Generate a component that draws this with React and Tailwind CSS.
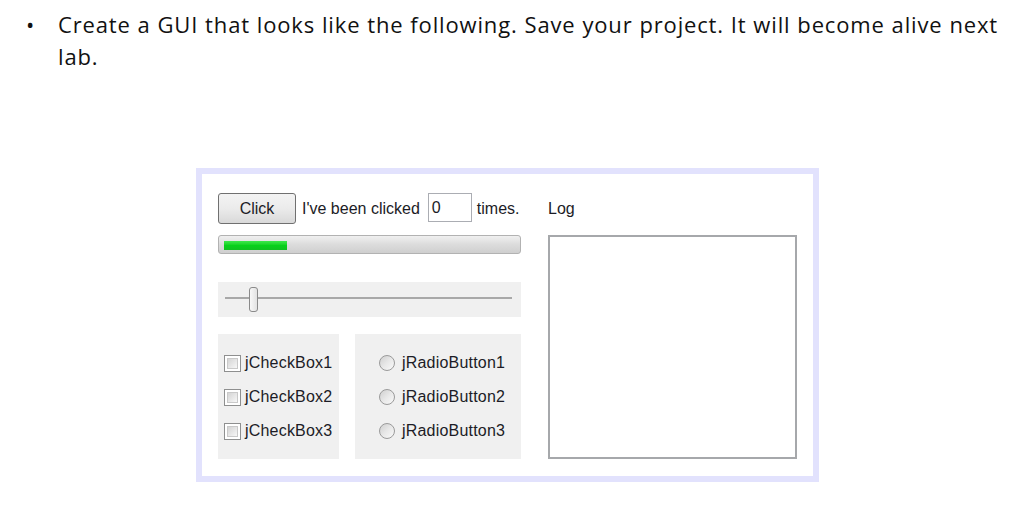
import React from "react";

const gui = { fontFamily: '"Liberation Sans", Arial, sans-serif' };
const head = { fontFamily: '"Open Sans", "Noto Sans", sans-serif' };

function CheckRow({ label }) {
  return (
    <div className="flex h-[34px] items-center">
      <span className="box-border h-[17px] w-[17px] border border-[#8e8f8f] bg-white p-[2px]">
        <span className="block h-full w-full border border-[#c9c9c9] bg-gradient-to-br from-[#d4d4d4] to-[#f7f7f7]" />
      </span>
      <span className="ml-[4px] text-[16px] leading-none tracking-[0.2px] text-[#1c1c26]">{label}</span>
    </div>
  );
}

function RadioRow({ label }) {
  return (
    <div className="flex h-[34px] items-center">
      <span className="box-border h-[16px] w-[16px] rounded-full border border-[#9a9a9a] bg-gradient-to-br from-[#cfcfcf] via-[#e8e8e8] to-[#fafafa]" />
      <span className="ml-[7px] text-[16px] leading-none tracking-[0.2px] text-[#1c1c26]">{label}</span>
    </div>
  );
}

export default function App() {
  return (
    <div className="flex h-[514px] w-[1024px] flex-col bg-white">
      <div className="flex h-[168px] items-start pt-[8px]">
        <span className="ml-[26px] w-[32px] text-[22px] leading-[32px] text-[#111]" style={head}>
          •
        </span>
        <p
          className="w-[940px] text-justify text-[22px] leading-[32px] tracking-[0.85px] text-[#111]"
          style={head}
        >
          Create a GUI that looks like the following. Save your project. It will become alive next lab.
        </p>
      </div>

      <div
        className="ml-[196px] box-border flex h-[314px] w-[623px] border-[6px] border-[#e2e2fd] bg-white pl-[16px] pt-[19px]"
        style={gui}
      >
        <div className="flex w-[303px] flex-col">
          <div className="flex h-[31px] items-center">
            <button className="box-border h-[31px] w-[78px] rounded-[3px] border border-[#707070] bg-gradient-to-b from-[#f3f3f3] via-[#ebebeb] to-[#d9d9d9] text-[16px] text-[#1c1c26]">
              Click
            </button>
            <span className="ml-[6px] text-[16px] text-[#1c1c26]">I've been clicked</span>
            <span className="ml-[8px] box-border flex h-[29px] w-[44px] items-center self-start border border-[#abadb3] bg-white pl-[3px] text-[16px] text-[#1c1c26]">
              0
            </span>
            <span className="ml-[5px] text-[16px] text-[#1c1c26]">times.</span>
          </div>

          <div className="relative mt-[11px] box-border h-[19px] w-[303px] rounded-[3px] border border-[#b2b2b2] bg-gradient-to-b from-[#f0f0f0] via-[#dcdcdc] to-[#cfcfcf] pl-[5px] pt-[5px]">
            <div className="h-[9px] w-[63px] bg-gradient-to-b from-[#3be84a] via-[#06d11a] to-[#10c020]" />
          </div>

          <div className="relative mt-[28px] h-[35px] w-[303px] bg-[#f0f0f0]">
            <div className="absolute left-[7px] right-[9px] top-[15px] h-[2px] bg-[#a8a8a8]" />
            <div className="absolute left-[31px] top-[5px] box-border h-[25px] w-[9px] rounded-[3px] border border-[#8a8a8a] bg-gradient-to-r from-[#f8f8f8] to-[#e2e2e2]" />
          </div>

          <div className="mt-[17px] flex h-[125px] gap-[16px]">
            <div className="flex w-[121px] flex-col bg-[#f0f0f0] pl-[6px] pt-[12px]">
              <CheckRow label="jCheckBox1" />
              <CheckRow label="jCheckBox2" />
              <CheckRow label="jCheckBox3" />
            </div>
            <div className="flex w-[166px] flex-col bg-[#f0f0f0] pl-[24px] pt-[12px]">
              <RadioRow label="jRadioButton1" />
              <RadioRow label="jRadioButton2" />
              <RadioRow label="jRadioButton3" />
            </div>
          </div>
        </div>

        <div className="ml-[27px] flex flex-col">
          <div className="flex h-[31px] items-center text-[16px] text-[#1c1c26]">Log</div>
          <div className="mt-[11px] box-border h-[224px] w-[249px] border-2 border-[#a6a8ab] bg-white" />
        </div>
      </div>
    </div>
  );
}
